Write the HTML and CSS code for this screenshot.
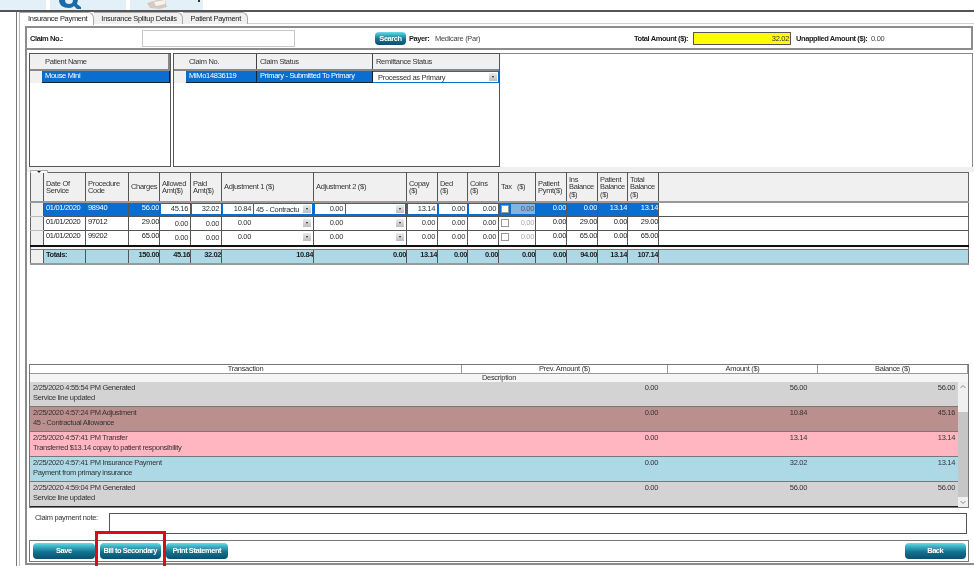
FILE: index.html
```html
<!DOCTYPE html>
<html lang="en">
<head>
    <meta charset="UTF-8">
    <title>Insurance Payment</title>
    <link rel="stylesheet" href="styles.css">
</head>
<body>
    <div class="toolbar">
        <div class="tool tool-a"></div>
        <div class="tool tool-b">
            <svg width="30" height="10" viewBox="0 0 30 10"><path d="M1 0 C1 5 5 8 11 8 C13 8 15 7 16 6 L19 9 L23 9 L23 7 L19 4 L20 0 L15 0 C15 3 13 4 11 4 C9 4 7 3 7 0 Z" fill="#1b6aa8"/></svg>
        </div>
        <div class="tool tool-c">
            <svg width="60" height="10" viewBox="0 0 60 10"><path d="M4 3 L14 0 L22 0 L24 7 L16 9 L7 8 Z" fill="#d9c9bd"/><path d="M11 2 L22 0 L22 4 L13 6 Z" fill="#f6f4f2"/><rect x="55" y="0" width="2" height="2" fill="#333"/></svg>
        </div>
    </div>
    <div class="shell">
        <div class="rail"></div>
        <div class="main">
            <div class="tabs">
                <span class="tab tab-active">Insurance Payment</span>
                <span class="tab tab-split">Insurance Splitup Details</span>
                <span class="tab tab-patient">Patient Payment</span>
            </div>
            <div class="panel">
                <div class="search-row">
                    <b class="claim-label">Claim No.:</b>
                    <div class="claim-input"></div>
                    <button class="btn btn-search">Search</button>
                    <b class="payer-label">Payer:</b>
                    <span class="payer">Medicare (Par)</span>
                    <b class="total-label">Total Amount ($):</b>
                    <div class="total-box">32.02</div>
                    <b class="unapplied-label">Unapplied Amount ($):</b>
                    <span class="unapplied">0.00</span>
                </div>

                <div class="lists">
                    <div class="list list-patient">
                        <div class="list-head">
                            <span class="stub"></span>
                            <span class="hd hd-patient">Patient Name</span>
                        </div>
                        <div class="list-row">
                            <span class="stub"></span>
                            <span class="sel sel-patient">Mouse Mini</span>
                        </div>
                    </div>
                    <div class="list list-claim">
                        <div class="list-head">
                            <span class="stub"></span>
                            <span class="hd hd-no">Claim No.</span>
                            <span class="hd hd-status">Claim Status</span>
                            <span class="hd hd-remit">Remittance Status</span>
                        </div>
                        <div class="list-row">
                            <span class="stub"></span>
                            <span class="sel hd-no">MiMo14836119</span>
                            <span class="sel hd-status">Primary - Submitted To Primary</span>
                            <span class="remit-select">Processed as Primary<i class="drop"></i></span>
                        </div>
                    </div>
                    <div class="list-rest"></div>
                </div>

                <div class="collapse-bar"><span class="collapse-btn"></span></div>

                <table class="lines">
                    <colgroup>
                        <col class="c0"><col class="c1"><col class="c2"><col class="c3"><col class="c3"><col class="c3"><col class="c4"><col class="c5"><col class="c3"><col class="c6"><col class="c3"><col class="c7"><col class="c3"><col class="c3"><col class="c6"><col class="c3"><col>
                    </colgroup>
                    <thead>
                        <tr>
                            <th class="stub-cell"></th>
                            <th>Date Of<br>Service</th>
                            <th>Procedure<br>Code</th>
                            <th>Charges</th>
                            <th>Allowed<br>Amt($)</th>
                            <th>Paid<br>Amt($)</th>
                            <th>Adjustment 1 ($)</th>
                            <th>Adjustment 2 ($)</th>
                            <th>Copay<br>($)</th>
                            <th>Ded<br>($)</th>
                            <th>Coins<br>($)</th>
                            <th>Tax &nbsp; ($)</th>
                            <th>Patient<br>Pymt($)</th>
                            <th>Ins<br>Balance<br>($)</th>
                            <th>Patient<br>Balance<br>($)</th>
                            <th>Total<br>Balance<br>($)</th>
                            <th class="rest"></th>
                        </tr>
                    </thead>
                    <tbody>
                        <tr class="row-selected">
                            <td class="stub-cell"></td>
                            <td>01/01/2020</td>
                            <td>98940</td>
                            <td class="num">56.00</td>
                            <td class="edit"><div class="field">45.16</div></td>
                            <td class="edit"><div class="field">32.02</div></td>
                            <td class="edit"><div class="adj"><div class="field field-amt">10.84</div><div class="combo">45 - Contractu<i class="drop"></i></div></div></td>
                            <td class="edit"><div class="adj"><div class="field field-amt">0.00</div><div class="combo"><i class="drop"></i></div></div></td>
                            <td class="edit"><div class="field">13.14</div></td>
                            <td class="edit"><div class="field">0.00</div></td>
                            <td class="edit"><div class="field">0.00</div></td>
                            <td class="edit"><div class="tax"><span class="check"></span><span class="tax-amt tax-amt-on">0.00</span></div></td>
                            <td class="num">0.00</td>
                            <td class="num">0.00</td>
                            <td class="num">13.14</td>
                            <td class="num">13.14</td>
                            <td class="rest"></td>
                        </tr>
                        <tr>
                            <td class="stub-cell"></td>
                            <td>01/01/2020</td>
                            <td>97012</td>
                            <td class="num">29.00</td>
                            <td class="edit"><div class="field field-low">0.00</div></td>
                            <td class="edit"><div class="field field-low">0.00</div></td>
                            <td class="edit"><div class="adj"><div class="field field-amt">0.00</div><div class="combo"><i class="drop"></i></div></div></td>
                            <td class="edit"><div class="adj"><div class="field field-amt">0.00</div><div class="combo"><i class="drop"></i></div></div></td>
                            <td class="edit"><div class="field">0.00</div></td>
                            <td class="edit"><div class="field">0.00</div></td>
                            <td class="edit"><div class="field">0.00</div></td>
                            <td class="edit"><div class="tax"><span class="check"></span><span class="tax-amt">0.00</span></div></td>
                            <td class="num">0.00</td>
                            <td class="num">29.00</td>
                            <td class="num">0.00</td>
                            <td class="num">29.00</td>
                            <td class="rest"></td>
                        </tr>
                        <tr>
                            <td class="stub-cell"></td>
                            <td>01/01/2020</td>
                            <td>99202</td>
                            <td class="num">65.00</td>
                            <td class="edit"><div class="field field-low">0.00</div></td>
                            <td class="edit"><div class="field field-low">0.00</div></td>
                            <td class="edit"><div class="adj"><div class="field field-amt">0.00</div><div class="combo"><i class="drop"></i></div></div></td>
                            <td class="edit"><div class="adj"><div class="field field-amt">0.00</div><div class="combo"><i class="drop"></i></div></div></td>
                            <td class="edit"><div class="field">0.00</div></td>
                            <td class="edit"><div class="field">0.00</div></td>
                            <td class="edit"><div class="field">0.00</div></td>
                            <td class="edit"><div class="tax"><span class="check"></span><span class="tax-amt">0.00</span></div></td>
                            <td class="num">0.00</td>
                            <td class="num">65.00</td>
                            <td class="num">0.00</td>
                            <td class="num">65.00</td>
                            <td class="rest"></td>
                        </tr>
                    </tbody>
                    <tfoot>
                        <tr class="totals-gap"><td colspan="17"></td></tr>
                        <tr class="totals">
                            <td class="stub-cell"></td>
                            <td>Totals:</td>
                            <td></td>
                            <td class="num">150.00</td>
                            <td class="num">45.16</td>
                            <td class="num">32.02</td>
                            <td class="num">10.84</td>
                            <td class="num">0.00</td>
                            <td class="num">13.14</td>
                            <td class="num">0.00</td>
                            <td class="num">0.00</td>
                            <td class="num">0.00</td>
                            <td class="num">0.00</td>
                            <td class="num">94.00</td>
                            <td class="num">13.14</td>
                            <td class="num">107.14</td>
                            <td class="rest"></td>
                        </tr>
                    </tfoot>
                </table>

                <div class="spacer"></div>

                <div class="history">
                    <div class="history-head">
                        <span class="h-trans">Transaction</span>
                        <span class="h-prev">Prev. Amount ($)</span>
                        <span class="h-amt">Amount ($)</span>
                        <span class="h-bal">Balance ($)</span>
                    </div>
                    <div class="history-sub">Description</div>
                    <div class="history-body">
                        <div class="entries">
                            <div class="entry entry-gray">
                                <div class="entry-line"><span class="h-trans">2/25/2020 4:55:54 PM Generated</span><span class="h-prev">0.00</span><span class="h-amt">56.00</span><span class="h-bal">56.00</span></div>
                                <div class="entry-desc">Service line updated</div>
                            </div>
                            <div class="entry entry-brown">
                                <div class="entry-line"><span class="h-trans">2/25/2020 4:57:24 PM Adjustment</span><span class="h-prev">0.00</span><span class="h-amt">10.84</span><span class="h-bal">45.16</span></div>
                                <div class="entry-desc">45 - Contractual Allowance</div>
                            </div>
                            <div class="entry entry-pink">
                                <div class="entry-line"><span class="h-trans">2/25/2020 4:57:41 PM Transfer</span><span class="h-prev">0.00</span><span class="h-amt">13.14</span><span class="h-bal">13.14</span></div>
                                <div class="entry-desc">Transferred $13.14 copay to patient responsibility</div>
                            </div>
                            <div class="entry entry-blue">
                                <div class="entry-line"><span class="h-trans">2/25/2020 4:57:41 PM Insurance Payment</span><span class="h-prev">0.00</span><span class="h-amt">32.02</span><span class="h-bal">13.14</span></div>
                                <div class="entry-desc">Payment from primary insurance</div>
                            </div>
                            <div class="entry entry-gray entry-last">
                                <div class="entry-line"><span class="h-trans">2/25/2020 4:59:04 PM Generated</span><span class="h-prev">0.00</span><span class="h-amt">56.00</span><span class="h-bal">56.00</span></div>
                                <div class="entry-desc">Service line updated</div>
                            </div>
                        </div>
                        <div class="scrollbar">
                            <div class="thumb">
                                <svg class="arrow" width="10" height="10" viewBox="0 0 10 10"><path d="M2.5 6 L5 3.5 L7.5 6" fill="none" stroke="#8a8a8a"/></svg>
                            </div>
                            <svg class="arrow arrow-down" width="10" height="10" viewBox="0 0 10 10"><path d="M2.5 4 L5 6.5 L7.5 4" fill="none" stroke="#8a8a8a"/></svg>
                        </div>
                    </div>
                </div>

                <div class="note-row">
                    <label class="note-label">Claim payment note:</label>
                    <div class="note-box"></div>
                </div>

                <div class="actions">
                    <button class="btn btn-action">Save</button>
                    <button class="btn btn-action">Bill to Secondary</button>
                    <button class="btn btn-action">Print Statement</button>
                    <button class="btn btn-action btn-back">Back</button>
                </div>
            </div>
        </div>
    </div>
    <div class="red-mark"></div>
</body>
</html>
```

FILE: styles.css
```css
/* Page */
html {
    background: #ffffff;
}

body {
    margin: 0;
    width: 974px;
    height: 566px;
    overflow: hidden;
    position: relative;
    background: #ffffff;
    font-family: "Liberation Sans", Arial, sans-serif;
    font-size: 7.5px;
    letter-spacing: -0.31px;
    color: #222;
    filter: blur(0.3px); /* the capture is a scaled-down, soft one */
}

b {
    letter-spacing: -0.42px;
}

/* Top toolbar, cut off by the screenshot */
.toolbar {
    display: flex;
    gap: 4px;
    height: 10px;
    border-bottom: 2px solid #555;
    background: #ffffff;
}

.tool {
    height: 10px;
    background: #e3f0f8;
    overflow: hidden;
}

.tool-a { width: 46px; }
.tool-b { width: 76px; padding-left: 8px; box-sizing: border-box; }
.tool-c { width: 73px; padding-left: 13px; box-sizing: border-box; }

/* Shell */
.shell {
    display: flex;
    height: 554px;
}

.rail {
    width: 16px;
    border-right: 1px solid #777;
    flex: none;
}

.main {
    flex: 1;
    margin-left: 2px;
    border-left: 1px solid #bbb;
    min-width: 0;
}

/* Tabs */
.tabs {
    display: flex;
    height: 11px;
    border-bottom: 1px solid #d0d0d0;
}

.tab {
    height: 10px;
    line-height: 9px;
    background: #f0f0f0;
    border: 1px solid #aaa;
    border-bottom: none;
    border-left: none;
    border-radius: 0 6px 0 0;
    white-space: nowrap;
    padding-top: 1px;
}

.tab-active {
    background: #ffffff;
    padding-left: 8px;
    padding-right: 6px;
    height: 11px;
    line-height: 10px;
}

.tab-split { padding-left: 7px; padding-right: 5px; }
.tab-patient { padding-left: 8px; padding-right: 6px; }

/* Panel under the tabs */
.panel {
    margin: 2px 0 0 5px;
    height: 539px;
    box-sizing: border-box;
    border-left: 2px solid #8c8c8c;
    border-bottom: 2px solid #8c8c8c;
    background: #ffffff;
}

.search-row {
    display: flex;
    align-items: center;
    height: 24px;
    box-sizing: border-box;
    margin-right: 1px;
    border: 2px solid #8c8c8c;
    border-left: none;
    padding-left: 3px;
    white-space: nowrap;
}

.claim-label { width: 112px; flex: none; }

.claim-input {
    width: 153px;
    height: 17px;
    box-sizing: border-box;
    flex: none;
    border: 1px solid #c8c8c8;
    margin-right: 80px;
}

.payer-label { width: 26px; flex: none; margin-left: 3px; }
.payer { width: 199px; flex: none; color: #444; }
.total-label { width: 54px; flex: none; }

.total-box {
    width: 98px;
    height: 13px;
    box-sizing: border-box;
    flex: none;
    margin: 0 5px;
    border: 1px solid #555;
    background: #ffff00;
    text-align: right;
    padding-right: 1px;
    line-height: 11px;
    color: #333;
}

.unapplied-label { width: 70px; flex: none; margin-right: 5px; }
.unapplied { color: #444; }

/* Buttons */
.btn {
    font-family: inherit;
    font-weight: bold;
    font-size: 7.5px;
    letter-spacing: -0.45px;
    color: #ffffff;
    border: none;
    padding: 0;
    cursor: pointer;
    background: linear-gradient(#62dfe8 0%, #3fb0c2 22%, #12748f 55%, #0a4f72 100%);
    border-radius: 4px;
}

.btn-search {
    width: 31px;
    height: 13px;
    flex: none;
}

/* Patient and claim lists */
.lists {
    display: flex;
    height: 114px;
    margin-top: 3px;
    padding-left: 2px;
}

.list {
    box-sizing: border-box;
    border: 1px solid #555;
    height: 114px;
    flex: none;
}

.list-patient { width: 142px; margin-right: 2px; }
.list-claim { width: 327px; }

.list-rest {
    flex: 1;
    border-top: 1px solid #888;
    border-right: 1px solid #888;
    margin-right: 1px;
}

.list-head {
    display: flex;
    height: 15px;
    background: #f0f0f0;
    border-bottom: 2px solid #888;
}

.list-row {
    display: flex;
    height: 12px;
}

.stub {
    width: 12px;
    flex: none;
    background: #f0f0f0;
}

.hd {
    padding-left: 3px;
    line-height: 15px;
    box-sizing: border-box;
    color: #333;
    border-right: 1px solid #444;
}

.hd-patient { flex: 1; border-right: 2px solid #888; }
.hd-no { width: 71px; flex: none; }
.hd-status { width: 116px; flex: none; }
.hd-remit { flex: 1; border-right: none; }

.sel {
    background: #0a6ed1;
    color: #ffffff;
    line-height: 10px;
    padding-left: 3px;
    box-sizing: border-box;
    border-bottom: 1px solid #123;
    border-right: 1px solid #123;
}

.sel-patient { flex: 1; }

.remit-select {
    flex: 1;
    position: relative;
    background: #ffffff;
    border: 1px solid #0a6ed1;
    border-left: none;
    padding-left: 5px;
    line-height: 12px;
    color: #333;
    box-sizing: border-box;
}

.drop {
    position: absolute;
    right: 1px;
    top: 1px;
    bottom: 1px;
    width: 8px;
    background: linear-gradient(#ececec, #bdbdbd);
}

.drop::after {
    content: "";
    position: absolute;
    left: 2.5px;
    top: 50%;
    margin-top: -1px;
    border: 1.5px solid transparent;
    border-top: 2px solid #222;
    border-bottom: none;
}

.collapse-bar {
    height: 5px;
    background: #f0f0f0;
    padding-left: 3px;
    position: relative;
}

.collapse-btn {
    position: absolute;
    left: 3px;
    top: 3px;
    width: 18px;
    height: 3px;
    background: #ffffff;
    border: 1px solid #aaa;
    border-bottom: none;
    box-sizing: border-box;
}

.collapse-btn::after {
    content: "";
    position: absolute;
    left: 6px;
    top: 0;
    border: 2px solid transparent;
    border-top: 2px solid #222;
    border-bottom: none;
}

/* Service lines grid */
.lines {
    border-collapse: collapse;
    table-layout: fixed;
    width: 939px;
    margin-left: 3px;
    border: 1px solid #666;
}

.c0 { width: 13px; }
.c1 { width: 42px; }
.c2 { width: 43px; }
.c3 { width: 31px; }
.c4 { width: 92px; }
.c5 { width: 93px; }
.c6 { width: 30px; }
.c7 { width: 37px; }

.lines th {
    height: 28px;
    padding: 0 0 0 2px;
    background: #f0f0f0;
    font-weight: normal;
    text-align: left;
    line-height: 7.5px;
    color: #333;
    border-right: 1px solid #555;
    border-bottom: 2px solid #999;
    overflow: hidden;
}

.lines td {
    height: 12.2px;
    padding: 0 0 0 2px;
    line-height: 9px;
    vertical-align: top;
    border-right: 1px solid #555;
    border-bottom: 1px solid #555;
    white-space: nowrap;
    overflow: hidden;
}

.lines .stub-cell {
    background: #f0f0f0;
    padding: 0;
}

.lines td.stub-cell { border-bottom-color: #bbb; }

.lines td.rest, .lines th.rest { border-right: none; }

.lines td.num {
    text-align: right;
    padding: 0;
}

.lines td.edit {
    padding: 1px 0 0;
}

.row-selected td {
    background: #0a6ed1;
    color: #ffffff;
}

.lines .row-selected td.rest { background: #ffffff; }
.lines .row-selected td.stub-cell { background: #f0f0f0; }

.field {
    height: 10px;
    line-height: 10px;
    background: #ffffff;
    color: #333;
    text-align: right;
    padding-right: 2px;
    margin-left: 1px;
}

.field-low { margin-top: 1px; }

.adj {
    display: flex;
    gap: 1px;
}

.field-amt { width: 30px; flex: none; box-sizing: border-box; }

.combo {
    flex: 1;
    position: relative;
    height: 10px;
    line-height: 11px;
    background: #ffffff;
    color: #333;
    padding-left: 2px;
    margin-right: 1px;
    overflow: hidden;
}

.tax {
    display: flex;
    align-items: center;
    gap: 2px;
    padding-left: 2px;
}

.check {
    width: 8px;
    height: 8px;
    box-sizing: border-box;
    border: 1px solid #999;
    background: #ffffff;
    flex: none;
}

.tax-amt {
    flex: 1;
    text-align: right;
    color: #aaa;
    padding-right: 1px;
    line-height: 10px;
}

.tax-amt-on {
    background: #7fb4e6;
    color: #556;
}

.lines .totals-gap td {
    height: 2px;
    padding: 0;
    line-height: 0;
    font-size: 0;
    border-top: 2px solid #111;
    border-bottom: 1px solid #777;
    border-right: none;
    background: #f5f5f5;
}

.lines .totals td {
    height: 13px;
    background: #add8e6;
    font-weight: bold;
    letter-spacing: -0.42px;
    border-bottom: 2px solid #999;
    line-height: 10px;
    color: #222;
}

.lines .totals td.stub-cell { background: #f0f0f0; }

.spacer { height: 99px; }

/* Transaction history */
.history {
    width: 940px;
    margin-left: 2px;
    border: 1px solid #777;
    box-sizing: border-box;
}

.history-head {
    display: flex;
    height: 8px;
    line-height: 8px;
    text-align: center;
    border-bottom: 1px solid #999;
}

.h-trans { width: 432px; flex: none; }
.h-prev { width: 206px; flex: none; }
.h-amt { width: 150px; flex: none; }
.h-bal { flex: 1; }

.history-head span { border-right: 1px solid #999; box-sizing: border-box; color: #333; }

.history-sub {
    height: 8px;
    line-height: 8px;
    text-align: center;
    background: #f5f5f5;
    color: #333;
}

.history-body {
    display: flex;
}

.entries { flex: 1; min-width: 0; }

.entry {
    height: 24px;
    border-bottom: 1px solid #777;
    color: #333;
}

.entry-last { border-bottom: 1px solid #222; }

.entry-gray { background: #d3d3d3; }
.entry-brown { background: #bc8f8f; }
.entry-pink { background: #ffb6c1; }
.entry-blue { background: #add8e6; }

.entry-line {
    display: flex;
    height: 12px;
    line-height: 12px;
}

.entry-line span { box-sizing: border-box; }
.entry-line .h-trans { padding-left: 3px; }
.entry-line .h-prev { text-align: right; padding-right: 10px; }
.entry-line .h-amt { text-align: right; padding-right: 11px; }
.entry-line .h-bal { text-align: right; padding-right: 3px; }

.entry-desc {
    height: 12px;
    line-height: 8px;
    padding-left: 3px;
}

.scrollbar {
    width: 10px;
    flex: none;
    background: #c6c6c6;
    display: flex;
    flex-direction: column;
    justify-content: space-between;
}

.thumb {
    height: 30px;
    background: #f0f0f0;
}

.arrow { display: block; }
.arrow-down { background: #f0f0f0; }

/* Note */
.note-row {
    display: flex;
    height: 32px;
    box-sizing: border-box;
    padding: 5px 7px 0 8px;
}

.note-label {
    width: 74px;
    flex: none;
    color: #333;
}

.note-box {
    flex: 1;
    height: 21px;
    box-sizing: border-box;
    border: 1px solid #555;
}

/* Bottom actions */
.actions {
    display: flex;
    align-items: center;
    gap: 5px;
    width: 940px;
    height: 22px;
    box-sizing: border-box;
    margin-left: 2px;
    padding: 0 2px 0 3px;
    border: 1px solid #777;
}

.btn-action {
    width: 61.5px;
    height: 16px;
}

.btn-back { margin-left: auto; }

/* Red highlight drawn over the screenshot */
.red-mark {
    position: absolute;
    left: 95px;
    top: 531px;
    width: 71px;
    height: 40px;
    box-sizing: border-box;
    border: 3px solid #dd0b14;
}
```
